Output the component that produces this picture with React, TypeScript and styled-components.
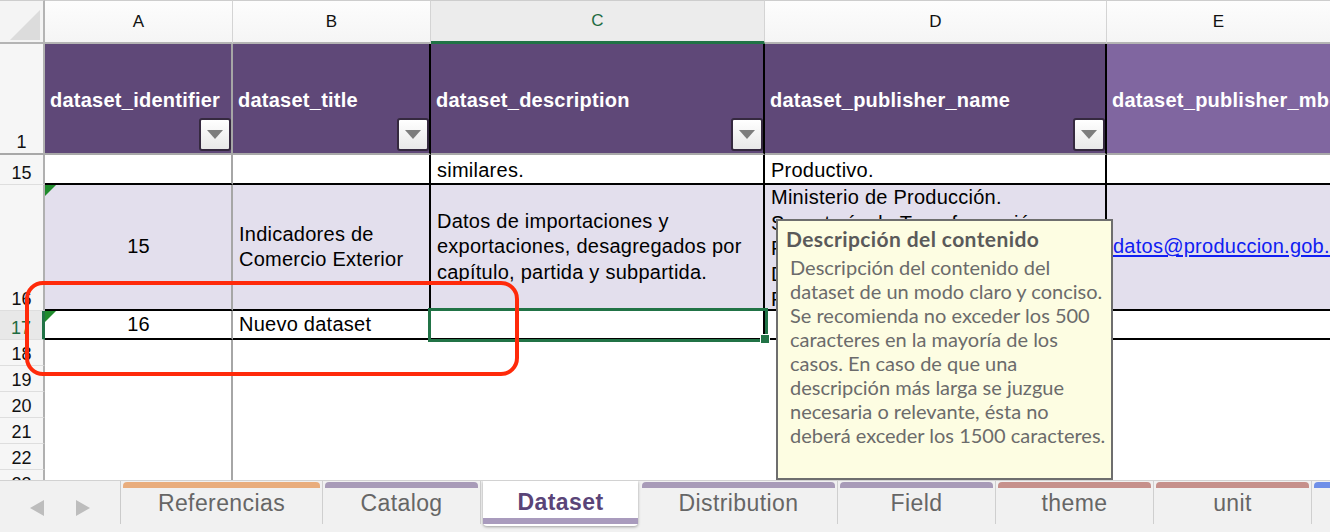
import React from 'react';
import styled, { createGlobalStyle } from 'styled-components';

const GlobalStyle = createGlobalStyle`
  *, *::before, *::after { box-sizing: border-box; }
  html, body { margin: 0; padding: 0; background: #fff; overflow: hidden; }
  body { font-family: "Liberation Sans", Arial, sans-serif; }
`;

type LineKind = 'black' | 'gray' | 'none';
const lineCss = (k: LineKind) =>
  k === 'black' ? '2px solid #000' : k === 'gray' ? '2px solid #a6a6a6' : 'none';

const Root = styled.div`
  width: 1330px;
  height: 532px;
  display: flex;
  flex-direction: column;
  overflow: hidden;
  background: #fff;
`;

const SheetArea = styled.div`
  position: relative;
  height: 480px;
  flex: none;
  overflow: hidden;
`;

const Grid = styled.div`
  display: grid;
  grid-template-columns: 45px 188px 198px 334px 342px 223px;
  grid-template-rows: 44px 111px 30px 126px 29px repeat(6, 26px);
`;

const Corner = styled.div`
  display: flex;
  align-items: flex-end;
  justify-content: flex-end;
  padding: 0 3px 2px 0;
  background: #f4f4f4;
  border-top: 1px solid #cdcdcd;
  border-right: 2px solid #b4b4b4;
  border-bottom: 2px solid #b4b4b4;
`;

const CornerTriangle = styled.div`
  width: 30px;
  height: 30px;
  background: #dcdcdc;
  clip-path: polygon(100% 0, 100% 100%, 0 100%);
`;

const ColHead = styled.div<{ $active?: boolean; $last?: boolean }>`
  display: flex;
  align-items: center;
  justify-content: center;
  border-top: 1px solid #cdcdcd;
  border-right: ${p => (p.$last ? 'none' : '1px solid #d4d4d4')};
  border-bottom: ${p => (p.$active ? '3px solid #217346' : '2px solid #b4b4b4')};
  background: ${p => (p.$active ? '#ececec' : 'linear-gradient(#fdfdfd, #f5f5f5)')};
  color: ${p => (p.$active ? '#1e6b41' : '#111')};
  font-size: 17px;
`;

const RowHead = styled.div<{ $active?: boolean; $freeze?: boolean }>`
  display: flex;
  align-items: flex-end;
  justify-content: center;
  background: ${p => (p.$active ? '#e8e8e8' : '#f6f6f6')};
  border-right: ${p => (p.$active ? '3px solid #217346' : '2px solid #b0b0b0')};
  border-bottom: ${p => (p.$freeze ? '2px solid #a8a8a8' : '1px solid #dedede')};
  color: ${p => (p.$active ? '#1e6b41' : '#111')};
  font-size: 18px;
  line-height: 21px;
  overflow: hidden;
`;

const HeadCell = styled.div<{ $bg: string; $right: LineKind }>`
  display: grid;
  overflow: hidden;
  background: ${p => p.$bg};
  border-right: ${p => lineCss(p.$right)};
  border-bottom: 2px solid #a8a8a8;
  color: #fff;
  font-weight: 700;
  font-size: 20px;
  letter-spacing: 0.25px;
`;

const HeadText = styled.span`
  grid-area: 1 / 1;
  align-self: center;
  padding: 3px 0 0 5px;
  white-space: nowrap;
`;

const FilterButton = styled.div`
  grid-area: 1 / 1;
  align-self: end;
  justify-self: end;
  width: 32px;
  height: 33px;
  margin-bottom: 2px;
  border: 2px solid #35293f;
  border-radius: 3px;
  background: linear-gradient(#ffffff, #e8e8e8);
  display: flex;
  align-items: center;
  justify-content: center;
`;

const Cell = styled.div<{
  $bg?: string;
  $right: LineKind;
  $bottom: LineKind;
  $v?: 'top' | 'center' | 'bottom';
  $h?: 'left' | 'center';
  $flag?: boolean;
}>`
  position: relative;
  display: flex;
  flex-direction: column;
  justify-content: ${p => (p.$v === 'top' ? 'flex-start' : p.$v === 'bottom' ? 'flex-end' : 'center')};
  align-items: ${p => (p.$h === 'center' ? 'center' : 'flex-start')};
  padding: 0 5px 0 6px;
  overflow: hidden;
  background: ${p => p.$bg ?? '#fff'};
  border-right: ${p => lineCss(p.$right)};
  border-bottom: ${p => lineCss(p.$bottom)};
  font-size: 20px;
  line-height: 25.5px;
  letter-spacing: 0.25px;
  color: #000;
  white-space: nowrap;

  &::before {
    content: '';
    display: ${p => (p.$flag ? 'block' : 'none')};
    position: absolute;
    top: 0;
    left: 0;
    width: 0;
    height: 0;
    border-top: 11px solid #1f8b2c;
    border-right: 11px solid transparent;
  }
`;

const Line = styled.div``;

const MailLink = styled.a`
  color: #1020f2;
  text-decoration: underline;
  text-underline-offset: 2px;
`;

const Annotation = styled.div`
  position: absolute;
  left: 25px;
  top: 281px;
  width: 494px;
  height: 95px;
  border: 4px solid #ff2a0a;
  border-radius: 18px;
  pointer-events: none;
`;

const Selection = styled.div`
  position: absolute;
  left: 428px;
  top: 308px;
  width: 340px;
  height: 34px;
  border: 3px solid #217346;
`;

const SelectionHandle = styled.div`
  position: absolute;
  right: -5px;
  bottom: -5px;
  width: 10px;
  height: 10px;
  background: #217346;
  border: 1px solid #fff;
`;

const Tooltip = styled.div`
  position: absolute;
  left: 776px;
  top: 219px;
  width: 337px;
  height: 261px;
  background: #fdfde2;
  border: 2px solid #6e6e6e;
  padding: 6px 6px 0 8px;
  font-family: Lato, "Open Sans", sans-serif;
  font-size: 20px;
  line-height: 24px;
  white-space: nowrap;
`;

const TooltipTitle = styled.div`
  font-weight: 700;
  font-size: 21px;
  letter-spacing: 0.4px;
  color: #5a5a5a;
  margin-bottom: 4px;
`;

const TooltipBody = styled.div`
  color: #6b6b6b;
  padding-left: 4px;
`;

const TabBar = styled.div`
  flex: 1;
  display: flex;
  align-items: flex-start;
  background: #f1f1f1;
  border-top: 1px solid #d2d2d2;
  overflow: hidden;
`;

const Nav = styled.div`
  width: 121px;
  height: 43px;
  flex: none;
  display: flex;
  align-items: center;
  justify-content: center;
  gap: 32px;
  padding-top: 10px;
  border-right: 1px solid #cbcbcb;
`;

const Tab = styled.div<{ $w: number; $active?: boolean }>`
  width: ${p => p.$w}px;
  flex: none;
  height: ${p => (p.$active ? '45px' : '43px')};
  display: flex;
  flex-direction: column;
  align-items: center;
  border-right: ${p => (p.$active ? 'none' : '1px solid #cfcfcf')};
  background: ${p => (p.$active ? '#fff' : 'transparent')};
  margin: ${p => (p.$active ? '0 2px' : '0')};
  border-radius: ${p => (p.$active ? '0 0 4px 4px' : '0')};
  box-shadow: ${p => (p.$active ? '0 1px 3px rgba(0,0,0,0.35)' : 'none')};
  padding-top: ${p => (p.$active ? '8px' : '0')};
`;

const TabStrip = styled.div<{ $color: string; $bottom?: boolean }>`
  align-self: stretch;
  height: 6px;
  margin: ${p => (p.$bottom ? '3px 0 0' : '1px 2px 0')};
  border-radius: ${p => (p.$bottom ? '0' : '4px 4px 0 0')};
  background: ${p => p.$color};
`;

const TabLabel = styled.div<{ $active?: boolean }>`
  font-size: 23px;
  line-height: 26px;
  letter-spacing: 0.4px;
  margin-top: ${p => (p.$active ? '0' : '2px')};
  color: ${p => (p.$active ? '#5a4478' : '#666')};
  font-weight: ${p => (p.$active ? 700 : 400)};
  white-space: nowrap;
`;

const PURPLE = '#5f4878';
const PURPLE_LIGHT = '#8066a0';
const LAVENDER = '#e3dfed';

const DropArrow = () => (
  <svg width="16" height="9" viewBox="0 0 16 9">
    <polygon points="0,0 16,0 8,9" fill="#7d7d7d" />
  </svg>
);

const headers: { text: string; right: LineKind; bg: string; filter: boolean }[] = [
  { text: 'dataset_identifier', right: 'gray', bg: PURPLE, filter: true },
  { text: 'dataset_title', right: 'black', bg: PURPLE, filter: true },
  { text: 'dataset_description', right: 'black', bg: PURPLE, filter: true },
  { text: 'dataset_publisher_name', right: 'black', bg: PURPLE, filter: true },
  { text: 'dataset_publisher_mbox', right: 'none', bg: PURPLE_LIGHT, filter: false },
];

const rights: LineKind[] = ['gray', 'black', 'black', 'black', 'none'];

const tabs = [
  { label: 'Referencias', w: 202, color: '#e9ad7d' },
  { label: 'Catalog', w: 158, color: '#a89bb8' },
  { label: 'Dataset', w: 155, color: '#a99bbd', active: true },
  { label: 'Distribution', w: 198, color: '#a89bb8' },
  { label: 'Field', w: 158, color: '#a89bb8' },
  { label: 'theme', w: 158, color: '#c6908b' },
  { label: 'unit', w: 158, color: '#c6908b' },
  { label: '', w: 120, color: '#6f8fe8' },
];

const tooltipLines = [
  'Descripción del contenido del',
  'dataset de un modo claro y conciso.',
  'Se recomienda no exceder los 500',
  'caracteres en la mayoría de los',
  'casos. En caso de que una',
  'descripción más larga se juzgue',
  'necesaria o relevante, ésta no',
  'deberá exceder los 1500 caracteres.',
];

export default function App() {
  return (
    <Root>
      <GlobalStyle />
      <SheetArea>
        <Grid>
          {/* column letters */}
          <Corner>
            <CornerTriangle />
          </Corner>
          <ColHead>A</ColHead>
          <ColHead>B</ColHead>
          <ColHead $active>C</ColHead>
          <ColHead>D</ColHead>
          <ColHead $last>E</ColHead>

          {/* row 1 */}
          <RowHead $freeze>1</RowHead>
          {headers.map(h => (
            <HeadCell key={h.text} $bg={h.bg} $right={h.right}>
              <HeadText>{h.text}</HeadText>
              {h.filter && (
                <FilterButton>
                  <DropArrow />
                </FilterButton>
              )}
            </HeadCell>
          ))}

          {/* row 15 */}
          <RowHead>15</RowHead>
          <Cell $right="gray" $bottom="black" />
          <Cell $right="black" $bottom="black" />
          <Cell $right="black" $bottom="black" $v="bottom">
            <Line>Estadísticas de ventas, servicios y</Line>
            <Line>similares.</Line>
          </Cell>
          <Cell $right="black" $bottom="black" $v="bottom">
            <Line>Secretaría de Industria y Desarrollo</Line>
            <Line>Productivo.</Line>
          </Cell>
          <Cell $right="none" $bottom="black" />

          {/* row 16 */}
          <RowHead>16</RowHead>
          <Cell $bg={LAVENDER} $right="gray" $bottom="black" $h="center" $flag>
            15
          </Cell>
          <Cell $bg={LAVENDER} $right="black" $bottom="black">
            <Line>Indicadores de</Line>
            <Line>Comercio Exterior</Line>
          </Cell>
          <Cell $bg={LAVENDER} $right="black" $bottom="black">
            <Line>Datos de importaciones y</Line>
            <Line>exportaciones, desagregados por</Line>
            <Line>capítulo, partida y subpartida.</Line>
          </Cell>
          <Cell $bg={LAVENDER} $right="black" $bottom="black" $v="top">
            <Line>Ministerio de Producción.</Line>
            <Line>Secretaría de Transformación</Line>
            <Line>Productiva. Dirección Nacional</Line>
            <Line>De Estudios para la</Line>
            <Line>Producción.</Line>
          </Cell>
          <Cell $bg={LAVENDER} $right="none" $bottom="black">
            <MailLink href="mailto:datos@produccion.gob.ar">datos@produccion.gob.ar</MailLink>
          </Cell>

          {/* row 17 */}
          <RowHead $active>17</RowHead>
          <Cell $right="gray" $bottom="black" $h="center" $flag>
            16
          </Cell>
          <Cell $right="black" $bottom="black">
            Nuevo dataset
          </Cell>
          <Cell $right="black" $bottom="black" />
          <Cell $right="black" $bottom="black" />
          <Cell $right="none" $bottom="black" />

          {/* rows 18-23 */}
          {[18, 19, 20, 21, 22, 23].map(n => (
            <React.Fragment key={n}>
              <RowHead>{n}</RowHead>
              {rights.map((r, i) => (
                <Cell key={i} $right={r === 'gray' ? 'gray' : 'none'} $bottom="none" />
              ))}
            </React.Fragment>
          ))}
        </Grid>

        <Selection>
          <SelectionHandle />
        </Selection>

        <Annotation />

        <Tooltip>
          <TooltipTitle>Descripción del contenido</TooltipTitle>
          <TooltipBody>
            {tooltipLines.map(l => (
              <Line key={l}>{l}</Line>
            ))}
          </TooltipBody>
        </Tooltip>
      </SheetArea>

      <TabBar>
        <Nav>
          <svg width="14" height="16" viewBox="0 0 14 16">
            <polygon points="14,0 14,16 0,8" fill="#bdbdbd" />
          </svg>
          <svg width="14" height="16" viewBox="0 0 14 16">
            <polygon points="0,0 0,16 14,8" fill="#bdbdbd" />
          </svg>
        </Nav>
        {tabs.map((t, i) =>
          t.active ? (
            <Tab key={i} $w={t.w} $active>
              <TabLabel $active>{t.label}</TabLabel>
              <TabStrip $color={t.color} $bottom />
            </Tab>
          ) : (
            <Tab key={i} $w={t.w}>
              <TabStrip $color={t.color} />
              <TabLabel>{t.label}</TabLabel>
            </Tab>
          )
        )}
      </TabBar>
    </Root>
  );
}
